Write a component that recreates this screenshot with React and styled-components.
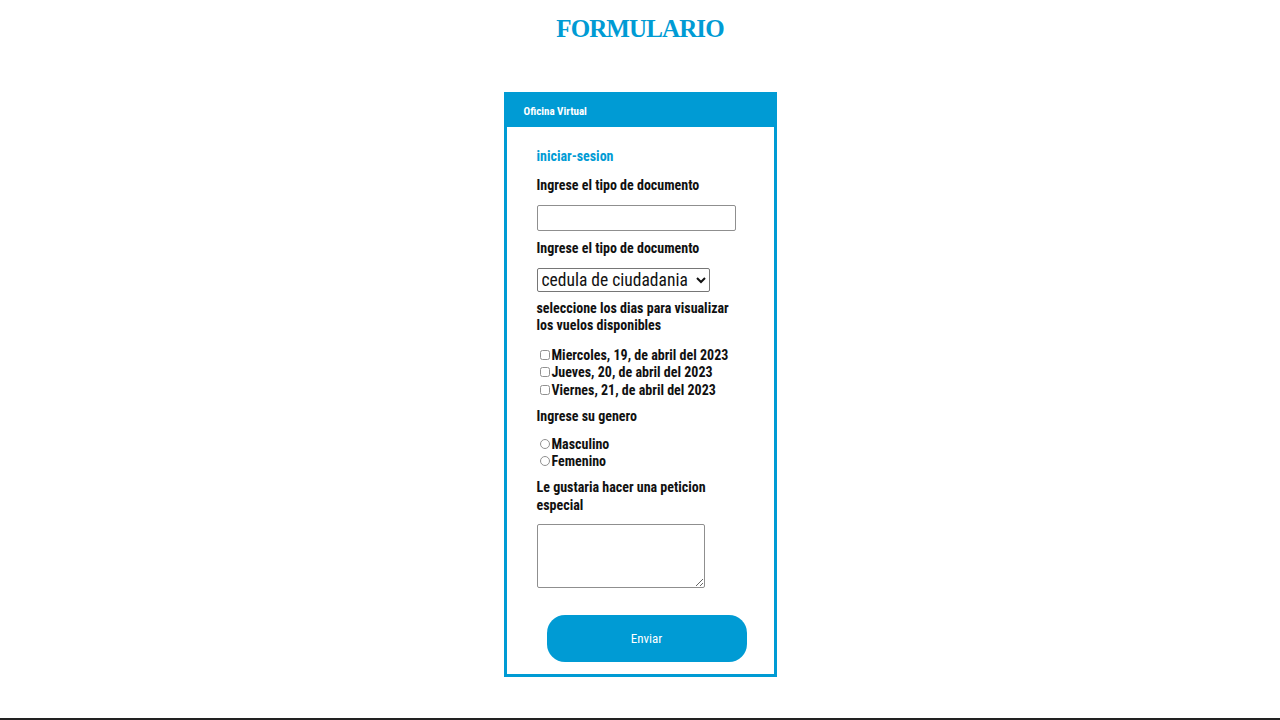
import React from 'react'
import styled, { createGlobalStyle } from 'styled-components'

const BLUE = '#009bd4'
const NARROW = '"Roboto Condensed", Roboto, "Liberation Sans", sans-serif'

const GlobalStyle = createGlobalStyle`
  html, body {
    margin: 0;
    padding: 0;
    background: #ffffff;
  }
  body {
    font-family: ${NARROW};
    font-stretch: 75%;
    color: #111111;
  }
`

const Page = styled.div`
  display: flex;
  flex-direction: column;
  align-items: center;
`

const Title = styled.h1`
  margin: 14px 0 0;
  font-family: "Liberation Serif", "DejaVu Serif", serif;
  font-size: 25px;
  line-height: 30px;
  letter-spacing: -0.9px;
  font-weight: bold;
  color: ${BLUE};
`

const Card = styled.div`
  margin-top: 48px;
  width: 267px;
  border: 3px solid ${BLUE};
`

const CardHeader = styled.div`
  height: 32px;
  display: flex;
  align-items: center;
  padding-left: 17px;
  background: ${BLUE};
  color: #ffffff;
  font-size: 11px;
  font-weight: bold;
`

const Form = styled.form`
  display: flex;
  flex-direction: column;
  align-items: flex-start;
  padding: 20px 30px 12px;
`

const SectionTitle = styled.div`
  font-size: 14px;
  line-height: 18px;
  font-weight: bold;
  color: ${BLUE};
`

const Label = styled.label`
  margin-top: ${p => p.$mt || 0}px;
  width: 200px;
  font-size: 14px;
  line-height: ${p => p.$lh || 18}px;
  font-weight: bold;
  color: #111111;
`

const TextInput = styled.input`
  margin-top: 11px;
  box-sizing: border-box;
  width: 199px;
  height: 26px;
  border: 1px solid #8f8f8f;
  border-radius: 2px;
`

const Select = styled.select`
  margin-top: 11px;
  box-sizing: border-box;
  width: 173px;
  height: 24px;
  font-family: ${NARROW};
  font-size: 17.5px;
  color: #111111;
  background: #ffffff;
  border: 1px solid #767676;
  border-radius: 2px;
  padding: 0;
`

const OptionList = styled.div`
  margin-top: ${p => p.$mt || 0}px;
  display: flex;
  flex-direction: column;
`

const Option = styled.label`
  display: flex;
  align-items: center;
  white-space: nowrap;
  height: ${p => p.$h || 17.5}px;
  font-size: 14px;
  font-weight: bold;
  color: #111111;
`

const Check = styled.input`
  box-sizing: border-box;
  width: 10px;
  height: 10px;
  margin: 0 2px 0 3px;
  opacity: 0.8;
`

const TextArea = styled.textarea`
  margin-top: 10px;
  box-sizing: border-box;
  width: 168px;
  height: 64px;
  border: 1px solid #8f8f8f;
  border-radius: 2px;
`

const Button = styled.button`
  margin: 27px 0 0 10px;
  width: 200px;
  height: 47px;
  border: none;
  border-radius: 18px;
  background: ${BLUE};
  color: #ffffff;
  font-family: ${NARROW};
  font-size: 13px;
`

const Footer = styled.div`
  align-self: stretch;
  margin-top: 41px;
  border-top: 2px solid #222222;
  height: 40px;
`

const dias = [
  'Miercoles, 19, de abril del 2023',
  'Jueves, 20, de abril del 2023',
  'Viernes, 21, de abril del 2023',
]

const App = () => {
  return (
    <Page>
      <GlobalStyle />
      <Title>FORMULARIO</Title>
      <Card>
        <CardHeader>Oficina Virtual</CardHeader>
        <Form onSubmit={e => e.preventDefault()}>
          <SectionTitle>iniciar-sesion</SectionTitle>
          <Label $mt={11}>Ingrese el tipo de documento</Label>
          <TextInput type="text" />
          <Label $mt={8}>Ingrese el tipo de documento</Label>
          <Select defaultValue="cc">
            <option value="cc">cedula de ciudadania</option>
            <option value="ti">tarjeta de identidad</option>
          </Select>
          <Label $mt={8} $lh={17}>
            seleccione los dias para visualizar los vuelos disponibles
          </Label>
          <OptionList $mt={12}>
            {dias.map(d => (
              <Option key={d}>
                <Check type="checkbox" />
                {d}
              </Option>
            ))}
          </OptionList>
          <Label $mt={8}>Ingrese su genero</Label>
          <OptionList $mt={11}>
            <Option $h={17}>
              <Check type="radio" name="genero" />
              Masculino
            </Option>
            <Option $h={17}>
              <Check type="radio" name="genero" />
              Femenino
            </Option>
          </OptionList>
          <Label $mt={8}>Le gustaria hacer una peticion especial</Label>
          <TextArea />
          <Button type="submit">Enviar</Button>
        </Form>
      </Card>
      <Footer />
    </Page>
  )
}

export default App
